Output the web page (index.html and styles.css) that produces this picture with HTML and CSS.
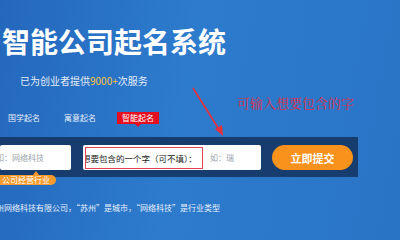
FILE: index.html
```html
<!DOCTYPE html>
<html lang="zh-CN">
<head>
  <meta charset="UTF-8">
  <meta name="viewport" content="width=device-width, initial-scale=1.0">
  <title>智能公司起名系统</title>
  <link rel="stylesheet" href="styles.css">
</head>
<body>
  <div class="hero">
    <h1 class="title">智能公司起名系统</h1>
    <p class="sub">已为创业者提供<span class="num">9000+</span>次服务</p>

    <div class="tabs">
      <span class="tab">国学起名</span>
      <span class="tab">寓意起名</span>
      <span class="tab active">智能起名</span>
    </div>

    <div class="search">
      <div class="field field-industry">如：网络科技</div>
      <div class="field field-word">
        <span class="word-label">想要包含的一个字（可不填）：</span>
        <span class="hint">如：瑞</span>
      </div>
      <button class="submit">立即提交</button>
    </div>
    <div class="tag">公司经营行业</div>

    <p class="example">州网络科技有限公司，“苏州”是城市，“网络科技”是行业类型</p>

    <!-- 标注 -->
    <svg class="arrow" width="40" height="52" viewBox="0 0 40 52">
      <line x1="1" y1="1" x2="28" y2="44" stroke="#e8303c" stroke-width="1.6"/>
      <polygon points="31,49 23,42 30,38" fill="#e8303c"/>
    </svg>
    <div class="note">可输入想要包含的字</div>
  </div>
</body>
</html>
```

FILE: styles.css
```css
/* 基础 */
body, html {
  margin: 0;
  padding: 0;
  font-family: "Noto Sans CJK SC", "Noto Sans", sans-serif;
}

.hero {
  position: relative;
  width: 400px;
  height: 240px;
  overflow: hidden;
  background: linear-gradient(100deg, #2468bd 0%, #2d7bcd 45%, #2a74c6 100%);
  color: #fff;
}

.title {
  margin: 0;
  padding: 24px 0 0 2px;
  font-size: 28px;
  line-height: 34px;
  font-weight: 700;
}

.sub {
  margin: 16px 0 0;
  padding-left: 20px;
  font-size: 10px;
  line-height: 14px;
  color: #e3ecf7;
}

.num {
  color: #f6c343;
}

.tabs {
  display: flex;
  align-items: center;
  margin-top: 24px;
  padding-left: 8px;
  height: 12px;
}

.tab {
  font-size: 8px;
  line-height: 12px;
  margin-right: 24px;
  color: #e6eef8;
}

.tab.active {
  position: relative;
  margin-left: -3px;
  padding: 0 5px;
  background: #e50f1f;
  color: #fff;
}

.tab.active::after {
  content: "";
  position: absolute;
  left: 18px;
  bottom: -3px;
  border-left: 3px solid transparent;
  border-right: 3px solid transparent;
  border-top: 3px solid #e50f1f;
}

.search {
  display: flex;
  align-items: center;
  width: 358px;
  margin-top: 13px;
  padding: 8px 0 7px;
  background: #173c6e;
}

.field {
  height: 25px;
  background: #fff;
  border-radius: 2px;
  font-size: 8px;
  line-height: 25px;
  color: #9aa3ad;
  white-space: nowrap;
  overflow: hidden;
}

.field-industry {
  width: 71px;
  text-indent: -4px;
}

.field-word {
  display: flex;
  align-items: center;
  width: 178px;
  margin-left: 12px;
}

.word-label {
  width: 116px;
  height: 20px;
  margin-left: 2px;
  border: 1px solid #e04450;
  font-size: 8.5px;
  line-height: 20px;
  color: #222;
  text-indent: -4px;
  overflow: hidden;
}

.hint {
  margin-left: 7px;
}

.submit {
  width: 81px;
  height: 25px;
  margin-left: 11px;
  padding: 0;
  border: none;
  border-radius: 13px;
  background: #f8921c;
  color: #fff;
  font-family: inherit;
  font-size: 11px;
  font-weight: 700;
}

.tag {
  position: relative;
  width: fit-content;
  margin-top: -2px;
  padding: 0 6px 0 2px;
  height: 10px;
  border-radius: 0 5px 5px 0;
  background: #f39a2c;
  font-size: 8px;
  line-height: 10px;
  color: #fff;
}

.tag::before {
  content: "";
  position: absolute;
  left: 33px;
  top: -4px;
  border-left: 3px solid transparent;
  border-right: 3px solid transparent;
  border-bottom: 4px solid #f39a2c;
}

.example {
  margin: 17px 0 0;
  font-size: 8px;
  line-height: 12px;
  color: #e8f0fa;
  text-indent: -4px;
  white-space: nowrap;
}

.arrow {
  position: absolute;
  left: 192px;
  top: 87px;
}

.note {
  position: absolute;
  left: 237px;
  top: 96px;
  font-family: "Liberation Serif", "Noto Serif CJK SC", "Noto Sans CJK SC", serif;
  font-size: 13px;
  line-height: 16px;
  color: #d8324a;
}
```
